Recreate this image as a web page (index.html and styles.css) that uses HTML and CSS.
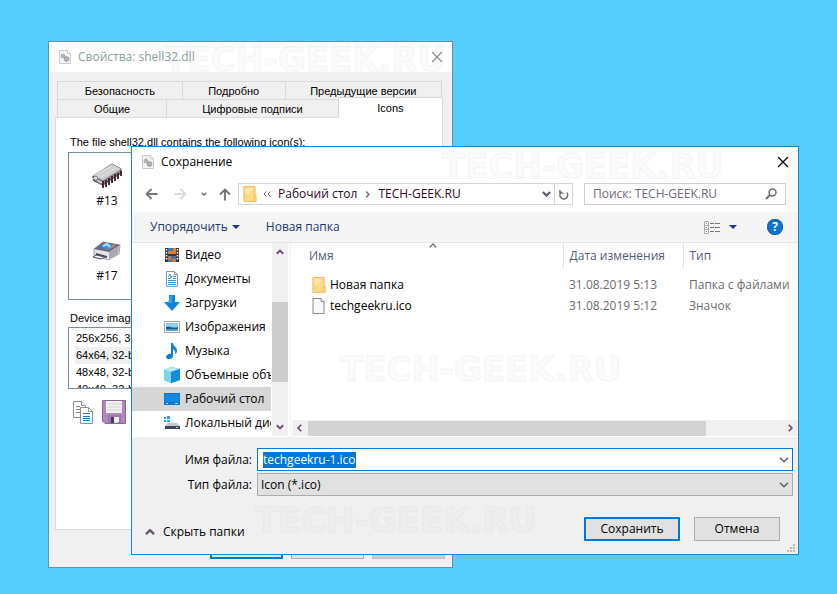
FILE: index.html
```html
<!DOCTYPE html>
<html lang="ru">
<head>
<meta charset="utf-8">
<title>Сохранение</title>
<link rel="stylesheet" href="styles.css">
</head>
<body>
<svg class="defs" aria-hidden="true">
  <symbol id="dll" viewBox="0 0 12 14"><path d="M.5.5h8l3 3v10H.5z" fill="#f3f3f3" stroke="#cbcbcb"/><path d="M8.500.5v3h3" fill="#fff" stroke="#cbcbcb"/><circle cx="4" cy="6" r="1.500" fill="none" stroke="#a9adb0" stroke-width="1.600"/><circle cx="7.500" cy="9" r="1.800" fill="none" stroke="#9ca2a6" stroke-width="1.800"/><path d="M1.500 6h5M4 3.500v5M5 9h5.500M7.500 6.500V12" stroke="#a9adb0" stroke-width=".8"/></symbol>
  <symbol id="folder" viewBox="0 0 13 16"><path d="M0 0h12v9h1v7H0z" fill="#fdda8b"/><path d="M.5.5h11v9M.5.5v15h12V9.500h-2v6" fill="none" stroke="#f6c05c"/><path d="M2 2h7v3H6v3H2z" fill="#ffe8a8"/></symbol>
  <symbol id="chev-down" viewBox="0 0 10 6"><path d="M1 .8l4 4 4-4" fill="none" stroke="currentColor" stroke-width="1.500"/></symbol>
  <symbol id="chev-up" viewBox="0 0 10 6"><path d="M1 5.200l4-4 4 4" fill="none" stroke="currentColor" stroke-width="1.500"/></symbol>
  <symbol id="bold-down" viewBox="0 0 10 6"><path d="M1 .8l4 4 4-4" fill="none" stroke="currentColor" stroke-width="2.400"/></symbol>
  <symbol id="bold-up" viewBox="0 0 10 6"><path d="M1 5.200l4-4 4 4" fill="none" stroke="currentColor" stroke-width="2.400"/></symbol>
  <symbol id="cross" viewBox="0 0 12 12"><path d="M1 1l10 10M11 1L1 11" fill="none" stroke="currentColor" stroke-width="1.200"/></symbol>
</svg>
<main class="desktop">
  <section class="props" aria-label="Свойства: shell32.dll">
    <div class="mark mark-props" aria-hidden="true">TECH-GEEK.RU</div>
    <header class="props-title">
      <svg class="ic-dll"><use href="#dll"/></svg>
      <h1>Свойства: shell32.dll</h1>
      <button class="close" aria-label="Закрыть"><svg class="ic-cross"><use href="#cross"/></svg></button>
    </header>
    <div class="props-body">
      <div class="tabs tabs-back">
        <button class="tab">Безопасность</button><button class="tab">Подробно</button><button class="tab">Предыдущие версии</button>
      </div>
      <div class="tabs tabs-front">
        <button class="tab">Общие</button><button class="tab">Цифровые подписи</button><button class="tab active">Icons</button>
      </div>
      <div class="panel">
        <p class="caption">The file shell32.dll contains the following icon(s):</p>
        <div class="icon-list">
          <figure>
            <svg class="ic-lib" viewBox="0 0 32 26"><path d="M2 13L21 1l9 5v4L12 22l-9-4z" fill="#8c8c8c" stroke="#4a3b45"/><path d="M2 12L21 1l9 5-18 11-4-2-2 1z" fill="#cfcfcf"/><path d="M1 15l4-2 2 2-2 3 5 3 3-1" fill="#e2e2e2" stroke="#77707a"/><path d="M12 18v7M15 17v7M18 15v7M21 13v7M24 11v7M27 10v6M30 8v5" stroke="#3a1a30" stroke-width="1.800"/><path d="M6 12L21 3M10 14L25 5" stroke="#e4e4e4"/></svg>
            <figcaption>#13</figcaption>
          </figure>
          <figure>
            <svg class="ic-lib" viewBox="0 0 32 26"><path d="M3 11L12 4l17 3-1 9-11 6-14-5z" fill="#e4e4ea" stroke="#a4a0b0"/><path d="M18 14l10-6-1 8-9 5z" fill="#a8a8b4"/><path d="M3 11L12 4l17 3-11 7z" fill="#69697a"/><path d="M9 9l5-4 11 2-8 5z" fill="#3c8fd8"/><path d="M12 8l4-2 3 3" fill="none" stroke="#aee4ff" stroke-width="2"/><path d="M19 10l5-3" stroke="#d58a50" stroke-width="2"/><path d="M5 15l11 3v2L5 17z" fill="#4a4a58"/><path d="M5 17L2 19l8 2 4-2z" fill="#f7f7fb" stroke="#4a4a68"/></svg>
            <figcaption>#17</figcaption>
          </figure>
        </div>
        <p class="caption caption-images">Device images:</p>
        <ul class="image-list">
          <li>256x256, 32-bit</li>
          <li class="current">64x64, 32-bit</li>
          <li>48x48, 32-bit</li>
          <li>40x40, 32-bit</li>
        </ul>
        <div class="tools">
          <button aria-label="Copy"><svg class="ic-copy" viewBox="0 0 21 23"><g fill="#fff" stroke="#8f8f8f"><path d="M.5.5h8l4 4v12H.5z"/><path d="M8.500.5v4h4M7.500 6.500h8l4 4v12h-12z"/><path d="M15.500 6.500v4h4" fill="none"/></g><path d="M3 5.500h4M3 8.500h4M3 11.500h4" stroke="#789"/><path d="M10 12.500h7M10 15.500h7M10 17.500h7M10 19.500h7" stroke="#2580ae"/></svg></button>
          <button aria-label="Save"><svg class="ic-disk" viewBox="0 0 24 24"><path d="M.5.5h23v23H3l-2.500-2.500z" fill="#b287c0" stroke="#8d659b"/><path d="M4 1h16v12H4z" fill="#f1f1f1"/><path d="M5 4h14M5 7h14M5 10h14" stroke="#d4d4d4"/><path d="M6 15h13v8H6z" fill="#d9d0db"/><path d="M6 15h13v8h-3v-6H9v6H6z" fill="#9b7aa9"/><path d="M9 17h3v6H9z" fill="#51375e"/><path d="M12 17h5v5h-5z" fill="#eee"/></svg></button>
        </div>
      </div>
      <div class="props-actions"><button class="default" aria-label="OK"></button><button aria-label="Отмена"></button><button disabled aria-label="Применить"></button></div>
    </div>
  </section>

  <section class="save" aria-label="Сохранение">
    <div class="mark mark-title" aria-hidden="true">TECH-GEEK.RU</div>
    <header class="save-title">
      <svg class="ic-dll"><use href="#dll"/></svg>
      <h2>Сохранение</h2>
      <button class="close" aria-label="Закрыть"><svg class="ic-cross"><use href="#cross"/></svg></button>
    </header>
    <nav class="nav">
      <div class="nav-buttons">
        <button aria-label="Назад"><svg class="ic-arrow" viewBox="0 0 13 12"><path d="M12.500 6H1.500M6.500 1l-5 5 5 5" fill="none" stroke="#77727a" stroke-width="1.800"/></svg></button>
        <button aria-label="Вперёд"><svg class="ic-arrow" viewBox="0 0 13 12"><path d="M.5 6h11M6.500 1l5 5-5 5" fill="none" stroke="#dcdcdc" stroke-width="1.800"/></svg></button>
        <button aria-label="Последние"><svg class="ic-recent"><use href="#bold-down"/></svg></button>
        <button aria-label="Вверх"><svg class="ic-up" viewBox="0 0 12 13"><path d="M6 12.500V1.500M1 6.500l5-5 5 5" fill="none" stroke="#77727a" stroke-width="1.900"/></svg></button>
      </div>
      <div class="address">
        <svg class="ic-folder"><use href="#folder"/></svg>
        <svg class="ic-dbl" viewBox="0 0 8 6"><path d="M3.500.5L1 3l2.500 2.500M7.500.5L5 3l2.500 2.500" fill="none" stroke="#6b666c"/></svg>
        <a href="#desktop">Рабочий стол</a>
        <svg class="ic-crumb" viewBox="0 0 5 7"><path d="M1 .5l3 3-3 3" fill="none" stroke="#6f6a70" stroke-width="1.300"/></svg>
        <a href="#folder-path">TECH-GEEK.RU</a>
        <button class="addr-drop" aria-label="История"><svg class="ic-chev"><use href="#bold-down"/></svg></button>
        <button class="addr-refresh" aria-label="Обновить"><svg class="ic-refresh" viewBox="0 0 11 12"><path d="M3 3a4.300 4.300 0 1 0 5.500.8M1 1v3.500h3.800" fill="none" stroke="#6f6a72" stroke-width="1.600"/></svg></button>
      </div>
      <div class="search">
        <input type="search" aria-label="Поиск" placeholder="Поиск: TECH-GEEK.RU">
        <svg class="ic-search" viewBox="0 0 12 12"><circle cx="7.500" cy="4.500" r="3.500" fill="none" stroke="#6f6875" stroke-width="1.400"/><path d="M5 7L1 11" stroke="#6f6875" stroke-width="2"/></svg>
      </div>
    </nav>
    <div class="toolbar">
      <button>Упорядочить <i class="tri"></i></button>
      <button>Новая папка</button>
      <button class="view" aria-label="Вид"><svg class="ic-view" viewBox="0 0 16 13"><path d="M.5.5h4v12h-4zM.5 4.500h4M.5 8.500h4" fill="#fff" stroke="#aaa"/><path d="M6 2.500h4M11 2.500h5M6 6.500h4M11 6.500h5M6 10.500h4M11 10.500h5" stroke="#777"/><path d="M2 2.500h1" stroke="#888"/><path d="M2 6.500h1" stroke="#16a"/><path d="M2 10.500h1" stroke="#b53"/></svg><i class="tri"></i></button>
      <button class="help" aria-label="Справка">?</button>
    </div>
    <div class="content">
      <div class="sidebar">
        <ul>
          <li><svg viewBox="0 0 16 16"><path d="M1 1h14v14H1z" fill="#333943"/><path d="M4 1h8v6H4z" fill="#d8803c"/><path d="M4 9h8v6H4z" fill="#c8793f"/><path d="M4 1h5v3H4zM7 9h5v3H7zM4 13h4v2H4z" fill="#387aad"/><path d="M2.500 2v12M13.500 2v12" stroke="#fff" stroke-width="1.500" stroke-dasharray="1.500 1.500"/></svg><span>Видео</span></li>
          <li><svg viewBox="0 0 16 16"><path d="M2.500.5h8l3 3v12h-11z" fill="#fff" stroke="#8a97a0"/><path d="M10.500.5v3h3" fill="none" stroke="#8a97a0"/><path d="M7 5.500h1M9 5.500h3M4 7.500h3M9 7.500h3M4 9.500h8M4 11.500h8M4 13.500h8" stroke="#2d9bd6"/><path d="M4 6l2-3 1 4" fill="none" stroke="#2d9bd6"/></svg><span>Документы</span></li>
          <li><svg viewBox="0 0 16 16"><path d="M5 0h6v7h5l-8 9-8-9h5z" fill="#0c84dc"/><path d="M6 1h2v7H4z" fill="#3ca0e8"/></svg><span>Загрузки</span></li>
          <li><svg viewBox="0 0 16 16"><path d="M.5 2.500h15v11H.5z" fill="#fff" stroke="#aaa"/><path d="M2 4h12v8H2z" fill="#8ed2f2"/><path d="M2 8c4-2 5 2 12 0v4H2z" fill="#235d82"/><path d="M2 10h12v2H2z" fill="#4da2d3"/></svg><span>Изображения</span></li>
          <li><svg viewBox="0 0 16 16"><path d="M7 0h2c0 3 4 4 4 8 0 1-1 3-2 3 1-3-1-4-2-5v7c0 4-7 4-7 1 0-2 3-4 5-3z" fill="#0c80d2"/></svg><span>Музыка</span></li>
          <li><svg viewBox="0 0 16 16"><path d="M0 3l7-3 9 2v11l-9 3-7-3z" fill="#168ed5"/><path d="M0 3l7 2v11l-7-3z" fill="#77d6ed"/><path d="M0 3l7-3 9 2-9 3z" fill="#b5edf7"/><path d="M7 5l9-3v11l-9 3z" fill="#138ed6"/></svg><span>Объемные объекты</span></li>
          <li class="current"><svg viewBox="0 0 16 16"><path d="M0 2h16v12H0z" fill="#0a79ce"/><path d="M1 3h14v8H1z" fill="#1689df"/><path d="M2 12.500h2M11 12.500h3" stroke="#9ad7ff"/></svg><span>Рабочий стол</span></li>
          <li><svg viewBox="0 0 16 16"><path d="M0 2h2v2H0zM3 1h3v3H3zM0 5h2v2H0zM3 5h3v2H3z" fill="#1ba8e8"/><path d="M4 8h9l3 3H1z" fill="#c4c7ce"/><path d="M1 11h15v3H1z" fill="#42465c"/><path d="M12 12.500h2" stroke="#8ee6ff"/></svg><span>Локальный диск</span></li>
        </ul>
        <div class="vscroll"><svg><use href="#bold-up"/></svg><span class="vthumb"></span><svg><use href="#bold-down"/></svg></div>
      </div>
      <div class="files">
        <div class="mark mark-files" aria-hidden="true">TECH-GEEK.RU</div>
        <svg class="sort"><use href="#chev-up"/></svg>
        <table>
          <thead><tr><th class="c-name">Имя</th><th class="c-date">Дата изменения</th><th>Тип</th></tr></thead>
          <tbody>
            <tr><td class="c-name"><div class="file"><svg class="ic-folder"><use href="#folder"/></svg>Новая папка</div></td><td>31.08.2019 5:13</td><td>Папка с файлами</td></tr>
            <tr><td class="c-name"><div class="file"><svg class="ic-folder" viewBox="0 0 13 16"><path d="M.5.5h8l3 3v12H.5z" fill="#f8fafa" stroke="#858b90"/><path d="M8.500.5v3h3" fill="#fff" stroke="#858b90"/></svg>techgeekru.ico</div></td><td>31.08.2019 5:12</td><td>Значок</td></tr>
          </tbody>
        </table>
        <div class="hscroll"><svg viewBox="0 0 6 10"><path d="M5.200 1l-4 4 4 4" fill="none" stroke="currentColor" stroke-width="2"/></svg><div class="htrack"><span class="hthumb"></span></div><svg viewBox="0 0 6 10"><path d="M.8 1l4 4-4 4" fill="none" stroke="currentColor" stroke-width="2"/></svg></div>
      </div>
    </div>
    <form class="fields">
      <label for="fname">Имя файла:</label>
      <div class="combo combo-name"><input id="fname" type="text" value="techgeekru-1.ico" autocomplete="off" spellcheck="false"><svg class="ic-chev"><use href="#chev-down"/></svg></div>
      <label for="ftype">Тип файла:</label>
      <div class="combo combo-type"><select id="ftype"><option>Icon (*.ico)</option></select><svg class="ic-chev"><use href="#chev-down"/></svg></div>
    </form>
    <footer class="actions">
      <div class="mark mark-foot" aria-hidden="true">TECH-GEEK.RU</div>
      <button class="hide"><svg class="ic-chev"><use href="#bold-up"/></svg>Скрыть папки</button>
      <button class="push default">Сохранить</button>
      <button class="push cancel">Отмена</button>
      <svg class="grip" viewBox="0 0 8 8"><path d="M6 0h2v2H6zM3 3h2v2H3zM6 3h2v2H6zM0 6h2v2H0zM3 6h2v2H3zM6 6h2v2H6z" fill="#bcbcbc"/></svg>
    </footer>
  </section>
</main>
<script src="script.js"></script>
</body>
</html>
```
FILE: styles.css
```css
* { box-sizing: border-box; }
body, h1, h2, p, ul, figure { margin: 0; padding: 0; }
body { font: 12px/16px "Open Sans", "Noto Sans", sans-serif; color: #000; background: #55cdfd; }
ul { list-style: none; }
svg { display: block; flex: none; overflow: visible; }
button, input, select { font: inherit; color: inherit; padding: 0; margin: 0; border: 0; background: none; border-radius: 0; outline: 0; }
button { display: flex; align-items: center; justify-content: center; white-space: nowrap; }
h1, h2 { font-size: 12px; line-height: 16px; font-weight: 400; flex: 1; }
.defs { position: absolute; width: 0; height: 0; }
.desktop { position: relative; min-height: 100vh; overflow: hidden; }

.mark { position: absolute; font: bold 34px/34px "DejaVu Sans", sans-serif; color: #fbfbfb; -webkit-text-stroke: 1px #f5f5f5; white-space: nowrap; pointer-events: none; }
.mark-props { left: 115px; top: 0; }
.mark-title { left: 310px; top: 2px; }
.mark-files { left: 49px; top: 109px; }
.mark-foot { left: 123px; top: 7px; color: #eeeeec; -webkit-text-stroke-color: #e9e9e9; }

.ic-dll { width: 12px; height: 14px; }
.ic-cross { width: 12px; height: 12px; }
.ic-folder { width: 14px; height: 16px; }
.ic-chev { width: 10px; height: 6px; color: #65566b; }

/* Properties window */
.props { position: absolute; left: 48px; top: 41px; width: 405px; border: 1px solid #6a8ea2; background: #f0f0f0; }
.props-title { display: flex; align-items: center; gap: 7px; height: 30px; padding: 0 9px 0 10px; background: #fff; }
.props .mark { z-index: 1; }
.props-title h1, .props-title .close, .props-title svg { position: relative; z-index: 2; }
.props-title h1 { color: #89a09e; }
.props-title .close { color: #8c8c8c; }
.props-body { padding: 9px 7px 8px 6px; font: 11px/16px "Liberation Sans", sans-serif; }
.tabs { display: flex; margin: 0 3px 0 2px; }
.tab { height: 18px; border: 1px solid #d9d9d9; border-width: 1px 0 0 1px; }
.tabs-back .tab { flex: 125; }
.tabs-back .tab:nth-child(2) { flex: 103; }
.tabs-back .tab:nth-child(3) { flex: 157; border-right-width: 1px; }
.tabs-front { align-items: flex-end; margin-right: 2px; }
.tabs-front .tab { flex: 109; }
.tabs-front .tab:nth-child(2) { flex: 172; }
.tabs-front .tab.active { flex: 104; height: 21px; margin: -2px 0 -1px; border-right-width: 1px; background: #fff; position: relative; }
.panel { height: 413px; margin-right: 2px; padding: 16px 12px; border: 1px solid #dcdcdc; background: #fff; }
.caption { padding-left: 2px; }
.icon-list { height: 148px; margin-top: 2px; padding: 10px 0 0 22px; border: 1px solid #7a8ba0; display: flex; flex-direction: column; gap: 29px; align-items: flex-start; font: 12px/16px "Open Sans", sans-serif; }
.icon-list figure { width: 32px; text-align: center; }
.icon-list figcaption { margin-top: 4px; }
.ic-lib { width: 32px; height: 26px; }
.caption-images { margin-top: 10px; }
.image-list { height: 62px; margin-top: 1px; padding: 2px 6px 1px; border: 1px solid #7a8ba0; overflow: hidden; line-height: 17px; }
.image-list li { padding-left: 1px; }
.image-list .current { background: #f0f0f0; }
.tools { display: flex; align-items: center; gap: 8px; margin: 11px 5px; }
.ic-copy { width: 21px; height: 23px; }
.ic-disk { width: 24px; height: 24px; }
.props-actions { display: flex; justify-content: flex-end; gap: 8px; padding-top: 6px; }
.props-actions button { width: 73px; height: 23px; border: 1px solid #adadad; background: #e1e1e1; }
.props-actions .default { border: 2px solid #0078d7; }
.props-actions :disabled { border-color: #bfbfbf; background: #ccc; }

/* Save dialog */
.save { position: absolute; left: 131px; top: 146px; right: 38px; border: 1px solid #1588d4; background: #fff; }
.save-title { position: relative; display: flex; align-items: center; gap: 7px; height: 30px; padding: 0 9px 0 10px; }
.nav { position: relative; display: flex; height: 35px; padding: 6px 12px 7px 13px; }
.nav-buttons { display: flex; align-items: center; width: 93px; gap: 16px; flex: none; }
.nav-buttons button:nth-child(3) { margin: 0 -4px 0 -2px; color: #77727a; }
.ic-arrow { width: 13px; height: 12px; }
.ic-recent { width: 6px; height: 4px; }
.ic-up { width: 12px; height: 13px; }
.address { display: flex; flex: 1; align-items: center; height: 22px; padding-left: 4px; border: 1px solid #d5d5d5; }
.address a { color: #2a0a25; text-decoration: none; }
.ic-dbl { width: 8px; height: 6px; margin: 0 7px 0 6px; }
.ic-crumb { width: 5px; height: 7px; margin: 0 8px; }
.addr-drop { width: 16px; margin-left: auto; }
.address .ic-chev { width: 9px; }
.addr-refresh { width: 18px; height: 20px; border-left: 1px solid #d5d5d5; }
.ic-refresh { width: 10px; height: 11px; }
.search { display: flex; flex: 0 0 202px; align-items: center; height: 22px; margin-left: 11px; padding: 0 8px; border: 1px solid #d0d0d0; }
.search input { flex: 1; min-width: 0; appearance: none; }
.search input::placeholder { color: #73697a; opacity: 1; }
.ic-search { width: 12px; height: 12px; }
.toolbar { display: flex; align-items: center; height: 31px; padding: 0 15px 0 18px; gap: 26px; background: #f5f5f5; border-bottom: 1px solid #e5e5e5; color: #1d3a72; }
.tri { width: 8px; height: 4px; margin-left: 4px; border: 4px solid transparent; border-top-color: #173a80; border-bottom: 0; }
.view { margin-left: auto; }
.view .tri { margin-left: 9px; }
.ic-view { width: 16px; height: 13px; }
.help { width: 16px; height: 16px; margin-left: 4px; border-radius: 50%; background: #0a74d4; color: #fff; font-weight: 700; box-shadow: 0 0 0 1px #28669f inset; }

.content { display: flex; height: 194px; }
.sidebar { display: flex; width: 159px; flex: none; border-right: 1px solid #f2f2f2; }
.sidebar ul { flex: 1; min-width: 0; overflow: hidden; }
.sidebar li { display: flex; align-items: center; gap: 5px; height: 24px; padding-left: 32px; white-space: nowrap; }
.sidebar li svg { width: 16px; height: 16px; }
.sidebar li.current { background: #d6d6d6; }
.vscroll { display: flex; flex-direction: column; align-items: center; width: 16px; margin: 0 2px 1px 1px; padding: 6px 0; background: #f0f0f0; color: #6b4a73; }
.vscroll svg { width: 8px; height: 6px; }
.vthumb { width: 16px; height: 80px; margin: 47px 0 auto; background: #cdcdcd; }
.files { position: relative; display: flex; flex-direction: column; flex: 1; min-width: 0; }
.sort { position: absolute; left: 138px; top: 0; width: 8px; height: 5px; color: #6b5a70; }
table { position: relative; width: 100%; border-collapse: collapse; table-layout: fixed; white-space: nowrap; }
th, td { padding: 0 0 0 6px; text-align: left; font-weight: 400; color: #6d6d6d; }
th { height: 26px; border-left: 1px solid #e5e5e5; color: #565b76; }
th.c-name { width: 272px; padding-left: 18px; border-left: 0; }
th.c-date { width: 120px; }
tbody tr { height: 21px; }
tbody::before { content: ""; display: block; height: 5px; }
td.c-name { padding-left: 21px; }
.file { display: flex; align-items: center; gap: 4px; color: #000; }
.hscroll { display: flex; align-items: center; height: 16px; margin: auto 0 1px 1px; padding: 0 5px; background: #f0f0f0; color: #6b4a73; }
.hscroll svg { width: 5px; height: 8px; }
.htrack { flex: 1; height: 15px; margin: 0 6px; }
.hthumb { display: block; width: 84%; height: 15px; background: #d2d2d2; }

.fields { display: grid; grid-template-columns: 120px 1fr; column-gap: 5px; row-gap: 2px; align-items: center; padding: 11px 5px 0 0; background: #f0f0f0; text-align: right; }
.combo { display: flex; align-items: center; height: 23px; padding-right: 3px; border: 1px solid #adadad; background: #e1e1e1; }
.combo-name { border-color: #0078d7; background: #fff; }
.combo input, .combo select { flex: 1; min-width: 0; height: 16px; padding-left: 4px; appearance: none; }
.combo input { padding-left: 5px; }
.combo select { padding-left: 3px; }
.combo input::selection { background: #0078d7; color: #fff; }
.actions { position: relative; display: flex; align-items: center; height: 58px; padding: 8px 18px 0 13px; background: #f0f0f0; }
.hide { position: relative; gap: 8px; margin-right: auto; margin-top: 6px; }
.push { width: 96px; height: 24px; border: 1px solid #adadad; background: #e1e1e1; }
.push.default { border: 2px solid #0078d7; }
.push.cancel { width: 86px; margin-left: 14px; }
.grip { position: absolute; right: 3px; bottom: 2px; width: 8px; height: 8px; }
```
FILE: script.js
```js
const nameField = document.getElementById("fname");
nameField.focus();
nameField.select();
```
